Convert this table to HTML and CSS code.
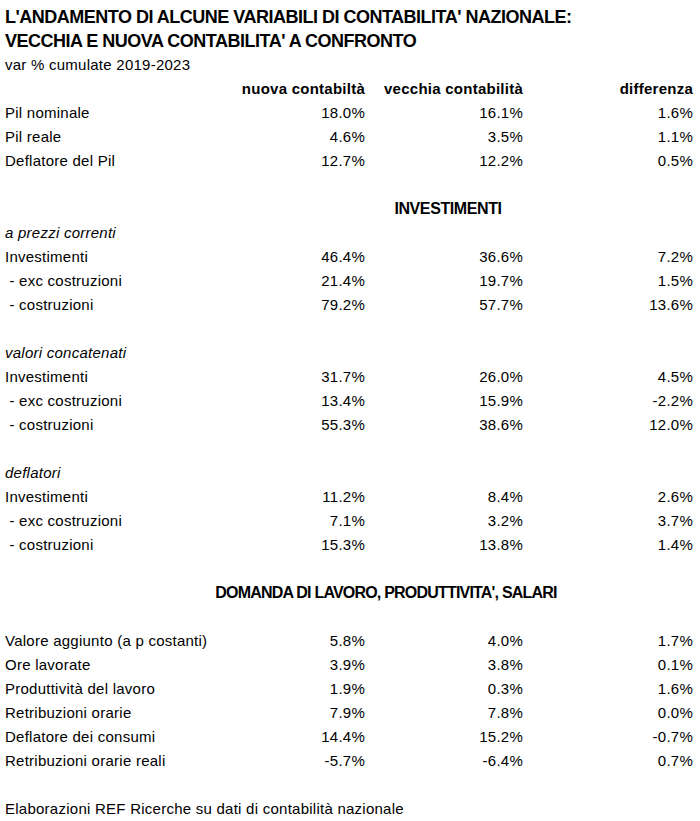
FILE: index.html
```html
<!DOCTYPE html>
<html lang="it">
<head>
<meta charset="utf-8">
<title>Contabilità nazionale</title>
<link rel="stylesheet" href="styles.css">
</head>
<body>
<div class="sheet">
  <div class="row"><div class="title">L'ANDAMENTO DI ALCUNE VARIABILI DI CONTABILITA' NAZIONALE:</div></div>
  <div class="row"><div class="title">VECCHIA E NUOVA CONTABILITA' A CONFRONTO</div></div>
  <div class="row"><div class="lab wide">var % cumulate 2019-2023</div></div>
  <div class="row head"><div></div><div class="num">nuova contabiltà</div><div class="num">vecchia contabilità</div><div class="num">differenza</div></div>
  <div class="row"><div class="lab">Pil nominale</div><div class="num">18.0%</div><div class="num">16.1%</div><div class="num">1.6%</div></div>
  <div class="row"><div class="lab">Pil reale</div><div class="num">4.6%</div><div class="num">3.5%</div><div class="num">1.1%</div></div>
  <div class="row"><div class="lab">Deflatore del Pil</div><div class="num">12.7%</div><div class="num">12.2%</div><div class="num">0.5%</div></div>
  <div class="row"></div>
  <div class="row"><div class="section inv">INVESTIMENTI</div></div>
  <div class="row"><div class="lab sub wide">a prezzi correnti</div></div>
  <div class="row"><div class="lab">Investimenti</div><div class="num">46.4%</div><div class="num">36.6%</div><div class="num">7.2%</div></div>
  <div class="row"><div class="lab">&nbsp;- exc costruzioni</div><div class="num">21.4%</div><div class="num">19.7%</div><div class="num">1.5%</div></div>
  <div class="row"><div class="lab">&nbsp;- costruzioni</div><div class="num">79.2%</div><div class="num">57.7%</div><div class="num">13.6%</div></div>
  <div class="row"></div>
  <div class="row"><div class="lab sub wide">valori concatenati</div></div>
  <div class="row"><div class="lab">Investimenti</div><div class="num">31.7%</div><div class="num">26.0%</div><div class="num">4.5%</div></div>
  <div class="row"><div class="lab">&nbsp;- exc costruzioni</div><div class="num">13.4%</div><div class="num">15.9%</div><div class="num">-2.2%</div></div>
  <div class="row"><div class="lab">&nbsp;- costruzioni</div><div class="num">55.3%</div><div class="num">38.6%</div><div class="num">12.0%</div></div>
  <div class="row"></div>
  <div class="row"><div class="lab sub wide">deflatori</div></div>
  <div class="row"><div class="lab">Investimenti</div><div class="num">11.2%</div><div class="num">8.4%</div><div class="num">2.6%</div></div>
  <div class="row"><div class="lab">&nbsp;- exc costruzioni</div><div class="num">7.1%</div><div class="num">3.2%</div><div class="num">3.7%</div></div>
  <div class="row"><div class="lab">&nbsp;- costruzioni</div><div class="num">15.3%</div><div class="num">13.8%</div><div class="num">1.4%</div></div>
  <div class="row"></div>
  <div class="row"><div class="section dom">DOMANDA DI LAVORO, PRODUTTIVITA', SALARI</div></div>
  <div class="row"></div>
  <div class="row"><div class="lab">Valore aggiunto (a p costanti)</div><div class="num">5.8%</div><div class="num">4.0%</div><div class="num">1.7%</div></div>
  <div class="row"><div class="lab">Ore lavorate</div><div class="num">3.9%</div><div class="num">3.8%</div><div class="num">0.1%</div></div>
  <div class="row"><div class="lab">Produttività del lavoro</div><div class="num">1.9%</div><div class="num">0.3%</div><div class="num">1.6%</div></div>
  <div class="row"><div class="lab">Retribuzioni orarie</div><div class="num">7.9%</div><div class="num">7.8%</div><div class="num">0.0%</div></div>
  <div class="row"><div class="lab">Deflatore dei consumi</div><div class="num">14.4%</div><div class="num">15.2%</div><div class="num">-0.7%</div></div>
  <div class="row"><div class="lab">Retribuzioni orarie reali</div><div class="num">-5.7%</div><div class="num">-6.4%</div><div class="num">0.7%</div></div>
  <div class="row"></div>
  <div class="row"><div class="lab wide">Elaborazioni REF Ricerche su dati di contabilità nazionale</div></div>
</div>
</body>
</html>
```
FILE: styles.css
```css
html, body {
  margin: 0;
  padding: 0;
  background: #ffffff;
}
body {
  font-family: "Liberation Sans", Arial, sans-serif;
  font-size: 15px;
  letter-spacing: 0.25px;
  color: #000000;
}
.sheet {
  width: 700px;
  padding: 5px 7px 0 5px;
  box-sizing: border-box;
}
.row {
  display: grid;
  grid-template-columns: 200px 160px 158px 170px;
  height: 24px;
  line-height: 24px;
  white-space: nowrap;
}
.lab {
  grid-column: 1;
}
.wide {
  grid-column: 1 / -1;
}
.num {
  text-align: right;
}
.head {
  font-weight: bold;
}
.sub {
  font-style: italic;
}
.title {
  grid-column: 1 / -1;
  font-weight: bold;
  font-size: 18px;
  letter-spacing: -0.5px;
}
.section {
  font-weight: bold;
  font-size: 16px;
}
.inv {
  grid-column: 3;
  text-align: center;
  padding-left: 8px;
  letter-spacing: -0.4px;
}
.dom {
  grid-column: 1 / -1;
  text-align: center;
  padding-left: 74px;
  letter-spacing: -0.8px;
}
```
